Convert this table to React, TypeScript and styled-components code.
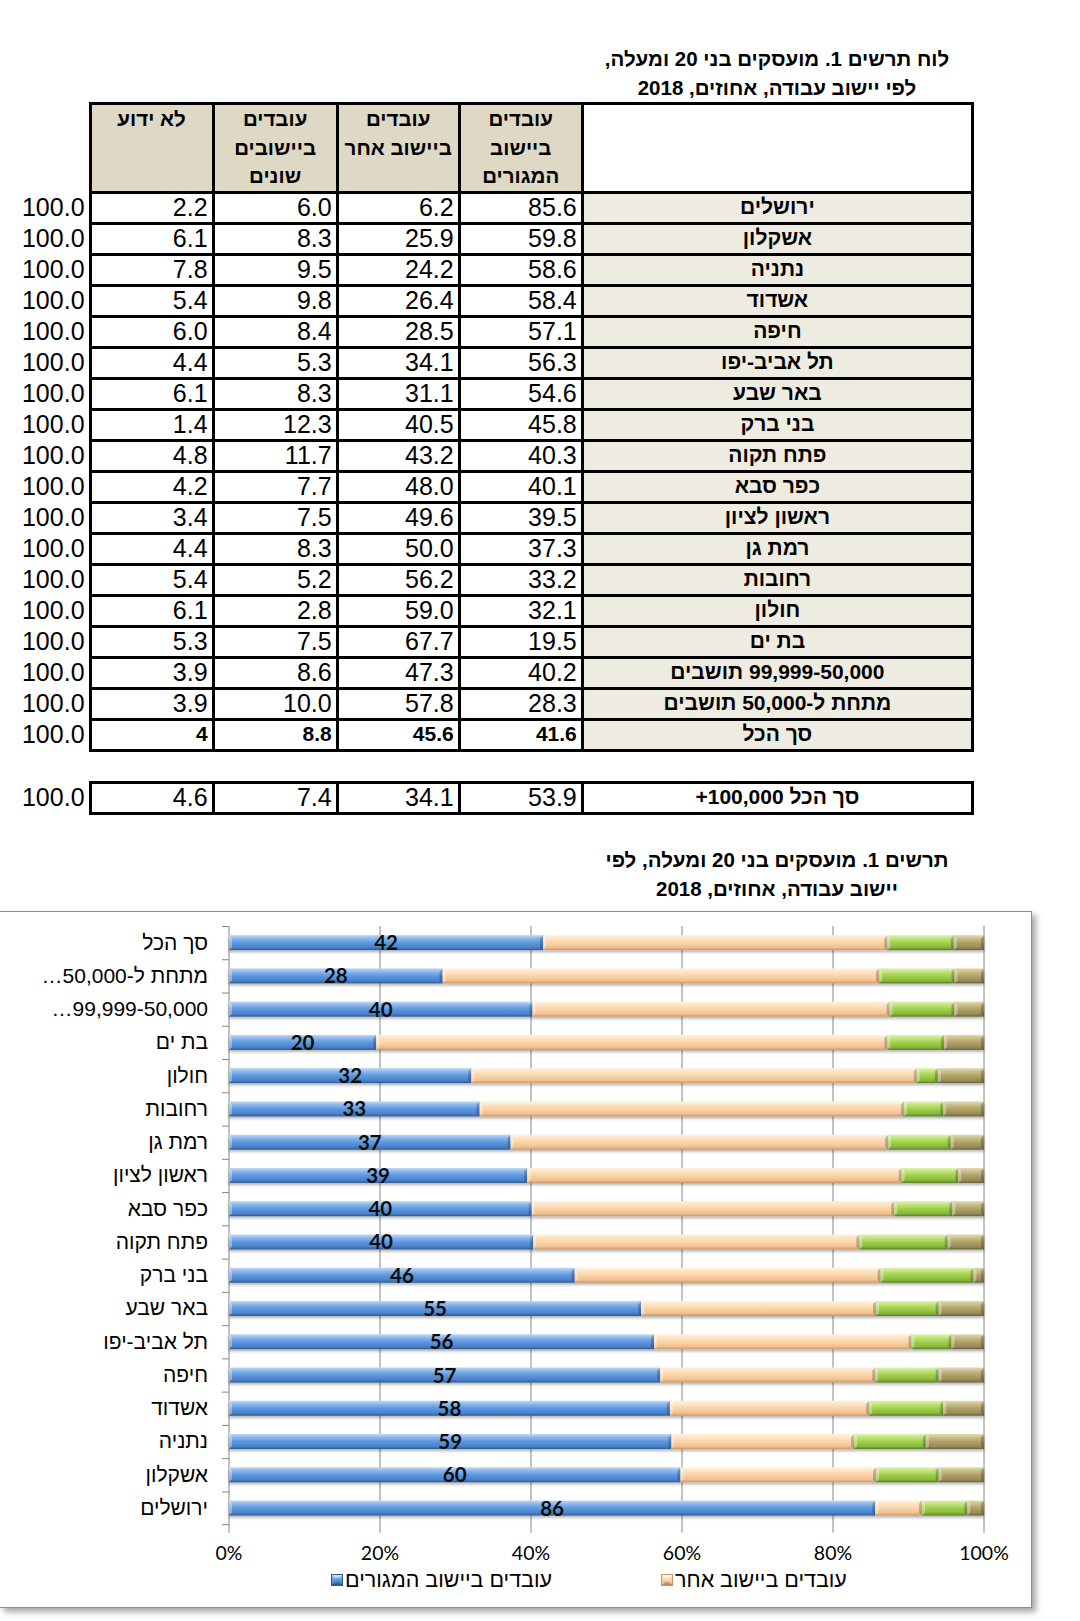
import React from "react"
import styled, { createGlobalStyle } from "styled-components"

const GlobalStyle = createGlobalStyle`
  html, body {
    margin: 0;
    padding: 0;
    background: #fff;
  }
  body {
    font-family: "Liberation Sans", Arial, "DejaVu Sans", sans-serif;
    color: #000;
  }
`

type Row = {
  label: string
  short?: string
  vals: [string, string, string, string]
  n: string
  bold?: boolean
}

// table order (top to bottom); the chart shows it reversed
const rows: Row[] = [
  { label: "ירושלים", vals: ["2.2", "6.0", "6.2", "85.6"], n: "86" },
  { label: "אשקלון", vals: ["6.1", "8.3", "25.9", "59.8"], n: "60" },
  { label: "נתניה", vals: ["7.8", "9.5", "24.2", "58.6"], n: "59" },
  { label: "אשדוד", vals: ["5.4", "9.8", "26.4", "58.4"], n: "58" },
  { label: "חיפה", vals: ["6.0", "8.4", "28.5", "57.1"], n: "57" },
  { label: "תל אביב-יפו", vals: ["4.4", "5.3", "34.1", "56.3"], n: "56" },
  { label: "באר שבע", vals: ["6.1", "8.3", "31.1", "54.6"], n: "55" },
  { label: "בני ברק", vals: ["1.4", "12.3", "40.5", "45.8"], n: "46" },
  { label: "פתח תקוה", vals: ["4.8", "11.7", "43.2", "40.3"], n: "40" },
  { label: "כפר סבא", vals: ["4.2", "7.7", "48.0", "40.1"], n: "40" },
  { label: "ראשון לציון", vals: ["3.4", "7.5", "49.6", "39.5"], n: "39" },
  { label: "רמת גן", vals: ["4.4", "8.3", "50.0", "37.3"], n: "37" },
  { label: "רחובות", vals: ["5.4", "5.2", "56.2", "33.2"], n: "33" },
  { label: "חולון", vals: ["6.1", "2.8", "59.0", "32.1"], n: "32" },
  { label: "בת ים", vals: ["5.3", "7.5", "67.7", "19.5"], n: "20" },
  {
    label: "50,000\u200F-99,999 תושבים",
    short: "50,000\u200F-99,999…",
    vals: ["3.9", "8.6", "47.3", "40.2"],
    n: "40",
  },
  {
    label: "מתחת ל-50,000 תושבים",
    short: "מתחת ל-50,000…",
    vals: ["3.9", "10.0", "57.8", "28.3"],
    n: "28",
  },
  { label: "סך הכל", vals: ["4", "8.8", "45.6", "41.6"], n: "42", bold: true },
]

const Page = styled.div`
  width: 1080px;
  padding-bottom: 11px;
`

const Title = styled.div<{ $top: number }>`
  margin-left: 572px;
  width: 410px;
  padding-top: ${(p) => p.$top}px;
  direction: rtl;
  text-align: center;
  font-size: 20.5px;
  font-weight: bold;
  line-height: 29px;
`

const Table = styled.table<{ $gap?: number }>`
  border-collapse: collapse;
  table-layout: fixed;
  width: 974px;
  margin-top: ${(p) => p.$gap || 0}px;
  font-family: "Liberation Sans", Arial, "DejaVu Sans", sans-serif;
`

const Col = styled.col<{ $w: number }>`
  width: ${(p) => p.$w}px;
`

const Tr = styled.tr<{ $h: number }>`
  height: ${(p) => p.$h}px;
`

const Outer = styled.td`
  border: none;
  padding: 0 4px 2px 0;
  text-align: right;
  font-size: 25px;
  line-height: 24px;
`

const Num = styled.td<{ $bold?: boolean }>`
  border: 3px solid #000;
  padding: 0 4px 2px 0;
  text-align: right;
  font-size: ${(p) => (p.$bold ? 21 : 25)}px;
  font-weight: ${(p) => (p.$bold ? "bold" : "normal")};
  line-height: 24px;
  background: #fff;
`

const Place = styled.td<{ $plain?: boolean }>`
  border: 3px solid #000;
  padding: 0 0 2px;
  direction: rtl;
  text-align: center;
  font-size: 21px;
  font-weight: bold;
  line-height: 24px;
  background: ${(p) => (p.$plain ? "#fff" : "#eeece1")};
`

const Head = styled.th<{ $blank?: boolean }>`
  border: 3px solid #000;
  padding: 0;
  vertical-align: top;
  direction: rtl;
  text-align: center;
  font-size: 20.5px;
  font-weight: bold;
  line-height: 28.5px;
  background: ${(p) => (p.$blank ? "#fff" : "#ddd9c4")};
`

const HeadGap = styled.th`
  border: none;
  padding: 0;
`

const ChartBox = styled.div`
  box-sizing: border-box;
  width: 1032px;
  height: 697px;
  margin-top: 8px;
  padding-top: 14px;
  border: 1px solid #8c8c8c;
  border-left: none;
  background: #fff;
  box-shadow: 4px 4px 6px rgba(0, 0, 0, 0.35);
`

const PlotRow = styled.div`
  display: flex;
  align-items: flex-start;
`

const Labels = styled.div`
  width: 208px;
  display: flex;
  flex-direction: column;
`

const Label = styled.div`
  height: 33.26px;
  line-height: 33.26px;
  direction: rtl;
  text-align: right;
  white-space: nowrap;
  font-size: 21px;
`

const Legend = styled.div`
  display: grid;
  grid-template-columns: 330px 330px;
  padding-left: 331px;
  height: 26px;
`

const LegendItem = styled.div`
  display: flex;
  align-items: center;
  gap: 2px;
`

const LegendText = styled.span`
  direction: rtl;
  font-size: 21.5px;
  line-height: 26px;
  white-space: nowrap;
`

const palette = {
  blue: ["#c0d9f5", "#8cb8ec", "#5e98de", "#4a82cb", "#2d5a94"],
  tan: ["#fff2e0", "#fee4c4", "#fbd4a9", "#f2c08e", "#c99769"],
  green: ["#e0f2b6", "#c2e47e", "#a1d04c", "#88b83b", "#5a7e22"],
  olive: ["#e3dab0", "#cbbf8a", "#afa269", "#978b57", "#6b623b"],
}
type Tone = keyof typeof palette
const tones: Tone[] = ["blue", "tan", "green", "olive"]

const X0 = 21
const W = 755
const BAND = 33.26
const BAR = 15
const px = (v: number) => X0 + (v / 100) * W

const Segment = ({ x0, x1, y, tone }: { x0: number; x1: number; y: number; tone: Tone }) => {
  const h = BAR
  const b = Math.min(3, (x1 - x0) / 2)
  return (
    <g>
      <rect x={x0} y={y} width={x1 - x0} height={h} fill={`url(#g-${tone})`} />
      <polygon
        points={`${x0},${y} ${x0 + b},${y + 3} ${x0 + b},${y + h - 3} ${x0},${y + h}`}
        fill="#fff"
        opacity={0.35}
      />
      <polygon
        points={`${x1},${y} ${x1 - b},${y + 3} ${x1 - b},${y + h - 3} ${x1},${y + h}`}
        fill="#000"
        opacity={0.22}
      />
    </g>
  )
}

const Gradients = () => (
  <defs>
    {tones.map((t) => (
      <linearGradient key={t} id={`g-${t}`} x1="0" y1="0" x2="0" y2="1">
        <stop offset="0" stopColor={palette[t][0]} />
        <stop offset="0.22" stopColor={palette[t][1]} />
        <stop offset="0.5" stopColor={palette[t][2]} />
        <stop offset="0.82" stopColor={palette[t][3]} />
        <stop offset="1" stopColor={palette[t][4]} />
      </linearGradient>
    ))}
    <filter id="shade" x="-5%" y="-50%" width="110%" height="200%">
      <feDropShadow dx="0" dy="2" stdDeviation="1.4" floodColor="#000" floodOpacity="0.3" />
    </filter>
  </defs>
)

const Plot = ({ data }: { data: Row[] }) => {
  const bottom = data.length * BAND
  return (
    <svg width="822" height="641" viewBox="0 0 822 641">
      <Gradients />
      {[20, 40, 60, 80, 100].map((v) => (
        <line key={v} x1={px(v)} x2={px(v)} y1={0} y2={bottom + 8} stroke="#868686" strokeWidth="1" />
      ))}
      <line x1={px(0)} x2={px(0)} y1={0} y2={bottom + 8} stroke="#868686" strokeWidth="1" />
      {data.map((_, j) => (
        <line key={j} x1={X0 - 7} x2={X0} y1={j * BAND + 0.5} y2={j * BAND + 0.5} stroke="#868686" />
      ))}
      <line x1={X0 - 7} x2={X0} y1={bottom} y2={bottom} stroke="#868686" />
      {data.map((r, i) => {
        const cy = i * BAND + BAND / 2
        const vals = r.vals.map(Number).reverse()
        let acc = 0
        return (
          <g key={r.label}>
            <g filter="url(#shade)">
              {vals.map((v, k) => {
                const a = acc
                acc += v
                return (
                  <Segment key={k} x0={px(a)} x1={px(Math.min(acc, 100))} y={cy - BAR / 2} tone={tones[k]} />
                )
              })}
            </g>
            <text
              x={(px(0) + px(vals[0])) / 2}
              y={cy + 7.5}
              textAnchor="middle"
              fontFamily="Lato, 'Open Sans', sans-serif"
              fontWeight="bold"
              fontSize="20.5"
              fill="#0d0d0d"
            >
              {r.n}
            </text>
          </g>
        )
      })}
      {[0, 20, 40, 60, 80, 100].map((v) => (
        <text
          key={v}
          x={px(v)}
          y={634}
          textAnchor="middle"
          fontFamily="Lato, 'Open Sans', sans-serif"
          fontSize="19.5"
          fill="#000"
        >
          {v}%
        </text>
      ))}
    </svg>
  )
}

const Swatch = ({ tone }: { tone: Tone }) => (
  <svg width="12" height="12" viewBox="0 0 12 12">
    <Gradients />
    <rect x="0.5" y="0.5" width="11" height="11" fill={`url(#g-${tone})`} stroke={palette[tone][4]} strokeWidth="1" />
    <polygon points="1,1 11,1 8,4 4,4" fill="#fff" opacity="0.4" />
    <polygon points="1,11 11,11 8,8 4,8" fill="#000" opacity="0.2" />
  </svg>
)

const App = () => {
  const chartRows = [...rows].reverse()
  return (
    <Page>
      <GlobalStyle />
      <Title $top={44}>
        לוח תרשים 1. מועסקים בני 20 ומעלה,
        <br />
        לפי יישוב עבודה, אחוזים, 2018
      </Title>

      <Table>
        <colgroup>
          <Col $w={90} />
          <Col $w={123} />
          <Col $w={124} />
          <Col $w={122} />
          <Col $w={123} />
          <Col $w={390} />
        </colgroup>
        <thead>
          <Tr $h={87}>
            <HeadGap />
            <Head>לא ידוע</Head>
            <Head>
              עובדים
              <br />
              ביישובים
              <br />
              שונים
            </Head>
            <Head>
              עובדים
              <br />
              ביישוב אחר
            </Head>
            <Head>
              עובדים
              <br />
              ביישוב
              <br />
              המגורים
            </Head>
            <Head $blank />
          </Tr>
        </thead>
        <tbody>
          {rows.map((r) => (
            <Tr $h={31} key={r.label}>
              <Outer>100.0</Outer>
              {r.vals.map((v, k) => (
                <Num key={k} $bold={r.bold}>
                  {v}
                </Num>
              ))}
              <Place>{r.label}</Place>
            </Tr>
          ))}
        </tbody>
      </Table>

      <Table $gap={29}>
        <colgroup>
          <Col $w={90} />
          <Col $w={123} />
          <Col $w={124} />
          <Col $w={122} />
          <Col $w={123} />
          <Col $w={390} />
        </colgroup>
        <tbody>
          <Tr $h={31}>
            <Outer>100.0</Outer>
            <Num>4.6</Num>
            <Num>7.4</Num>
            <Num>34.1</Num>
            <Num>53.9</Num>
            <Place $plain>סך הכל 100,000+</Place>
          </Tr>
        </tbody>
      </Table>

      <Title $top={30}>
        תרשים 1. מועסקים בני 20 ומעלה, לפי
        <br />
        יישוב עבודה, אחוזים, 2018
      </Title>

      <ChartBox>
        <PlotRow>
          <Labels>
            {chartRows.map((r) => (
              <Label key={r.label}>{r.short || r.label}</Label>
            ))}
          </Labels>
          <Plot data={chartRows} />
        </PlotRow>
        <Legend>
          <LegendItem>
            <Swatch tone="blue" />
            <LegendText>עובדים ביישוב המגורים</LegendText>
          </LegendItem>
          <LegendItem>
            <Swatch tone="tan" />
            <LegendText>עובדים ביישוב אחר</LegendText>
          </LegendItem>
        </Legend>
      </ChartBox>
    </Page>
  )
}

export default App
